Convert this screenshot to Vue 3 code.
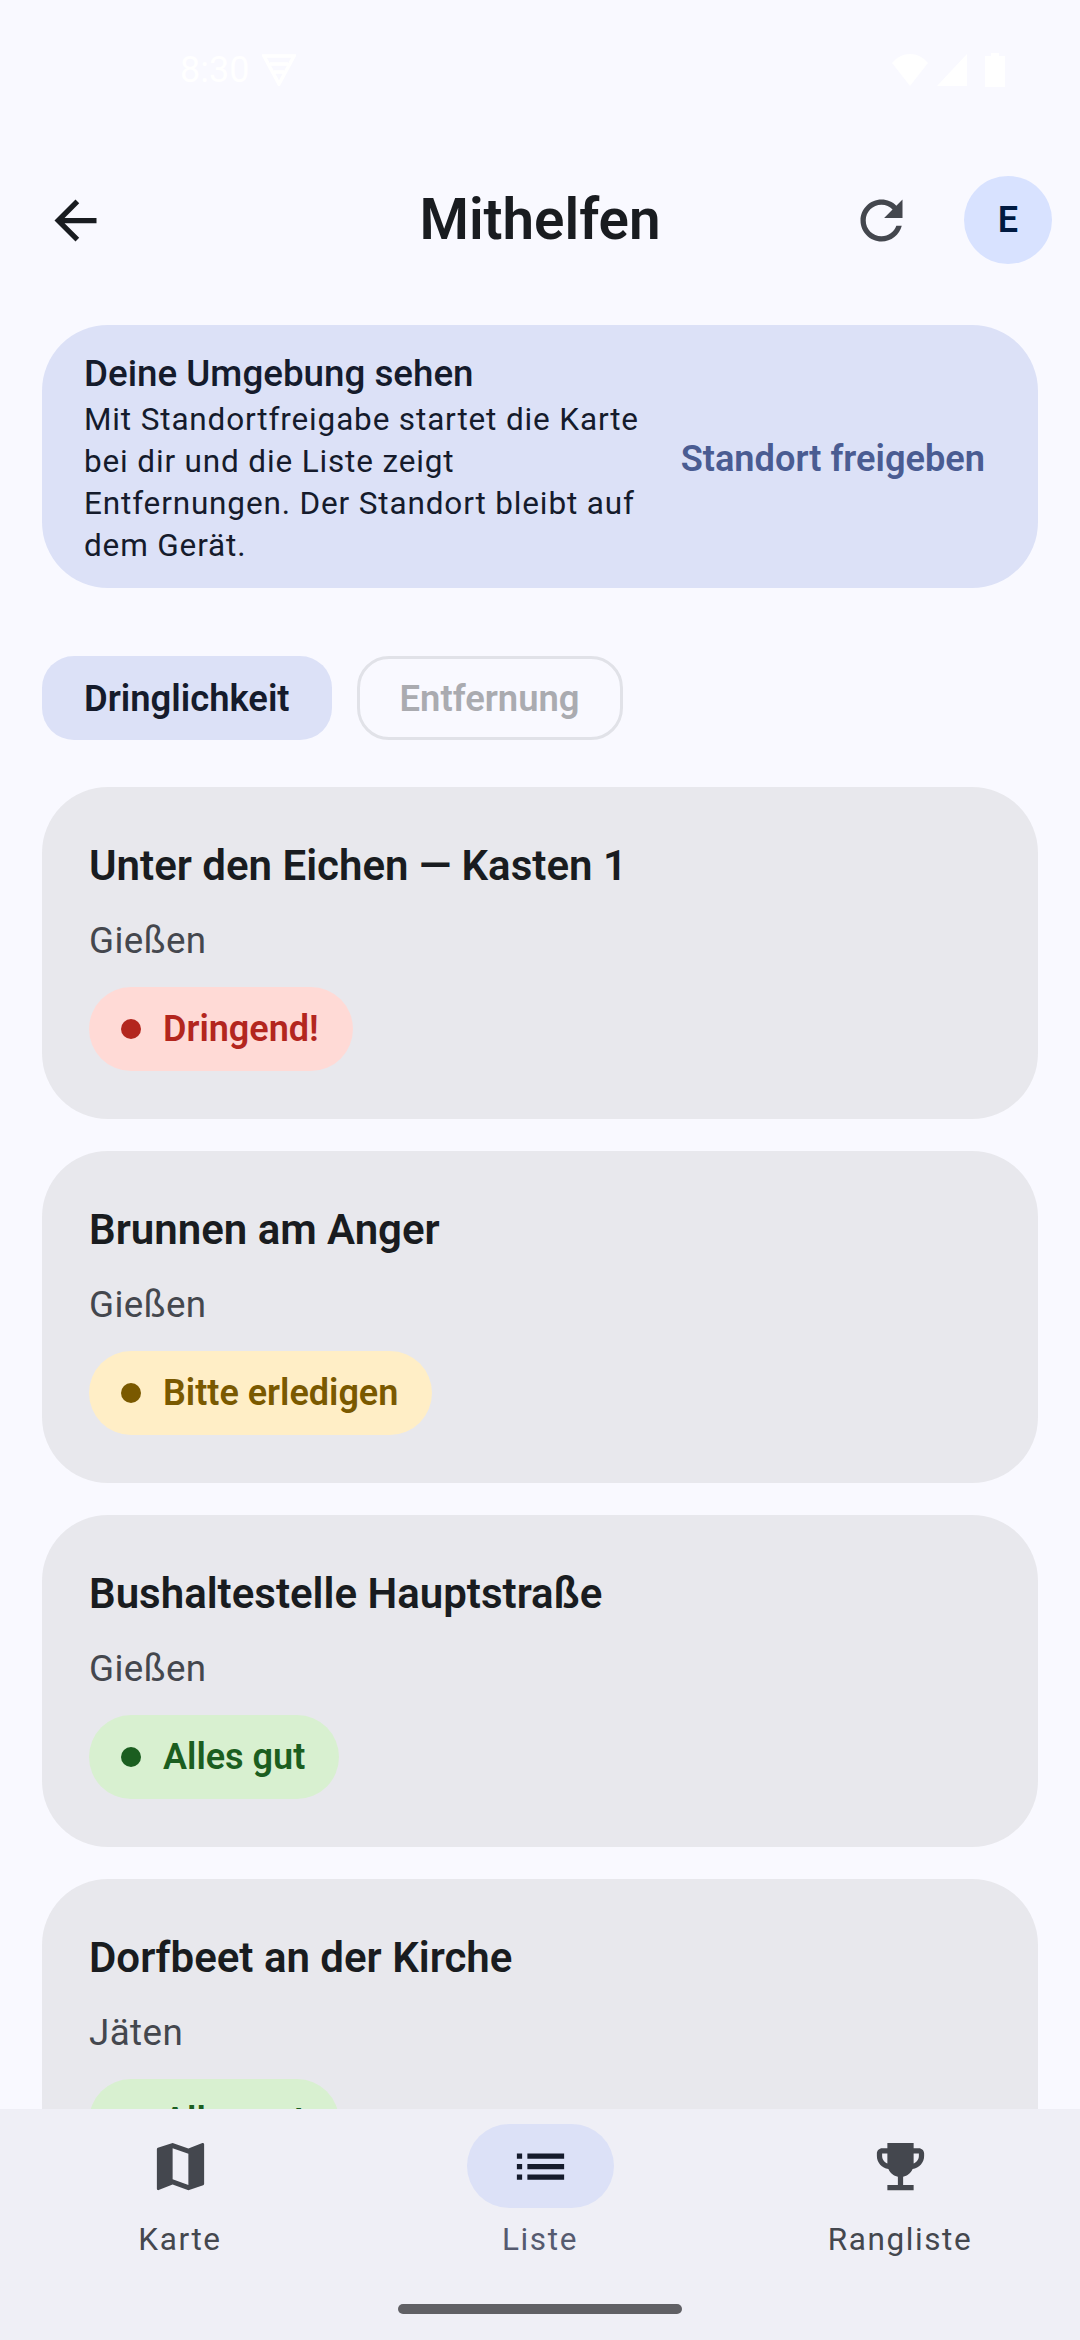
<script setup>
const spots = [
  { name: 'Unter den Eichen — Kasten 1', task: 'Gießen', label: 'Dringend!', tone: 'red' },
  { name: 'Brunnen am Anger', task: 'Gießen', label: 'Bitte erledigen', tone: 'amber' },
  { name: 'Bushaltestelle Hauptstraße', task: 'Gießen', label: 'Alles gut', tone: 'green' },
  { name: 'Dorfbeet an der Kirche', task: 'Jäten', label: 'Alles gut', tone: 'green' },
]
</script>

<template>
  <div class="screen">
    <div class="status">
      <div class="status-left">
        <span class="clock">8:30</span>
        <svg class="vpn" viewBox="0 0 34 32"><path d="M2 2h30L17 30zM8 10h18M12 18h10" fill="none" stroke="#fff" stroke-width="3.5" /></svg>
      </div>
      <div class="status-right">
        <svg class="wifi" viewBox="0 0 36 32"><path d="M0 9c10-12 26-12 36 0L18 32z" fill="#fff" /></svg>
        <svg class="signal" viewBox="0 0 30 32"><path d="M30 0v32H0z" fill="#fff" /></svg>
        <svg class="batt" viewBox="0 0 20 34"><path d="M0 3h6V0h8v3h6v31H0z" fill="#fff" /></svg>
      </div>
    </div>

    <header class="topbar">
      <svg class="icon" viewBox="0 0 24 24"><path d="M20 11H7.83l5.59-5.59L12 4l-8 8 8 8 1.41-1.41L7.83 13H20v-2z" /></svg>
      <h1 class="title">Mithelfen</h1>
      <svg class="icon refresh" viewBox="0 0 24 24"><path d="M17.65 6.35C16.2 4.9 14.21 4 12 4c-4.42 0-7.99 3.58-7.99 8s3.57 8 7.99 8c3.73 0 6.84-2.55 7.73-6h-2.08c-.82 2.33-3.04 4-5.65 4-3.31 0-6-2.69-6-6s2.69-6 6-6c1.66 0 3.14.69 4.22 1.78L13 11h7V4l-2.35 2.35z" /></svg>
      <div class="avatar">E</div>
    </header>

    <main class="content">
      <section class="banner">
        <div class="banner-text">
          <div class="banner-title">Deine Umgebung sehen</div>
          <p class="banner-body">Mit Standortfreigabe startet die Karte bei dir und die Liste zeigt Entfernungen. Der Standort bleibt auf dem Gerät.</p>
        </div>
        <span class="banner-action">Standort freigeben</span>
      </section>

      <div class="chips">
        <span class="chip chip-on">Dringlichkeit</span>
        <span class="chip chip-off">Entfernung</span>
      </div>

      <article v-for="spot in spots" :key="spot.name" class="card">
        <div class="card-title">{{ spot.name }}</div>
        <div class="card-task">{{ spot.task }}</div>
        <div class="badge" :class="spot.tone">
          <span class="dot"></span>
          <span>{{ spot.label }}</span>
        </div>
      </article>
    </main>

    <nav class="nav">
      <div class="nav-item">
        <div class="nav-pill">
          <svg class="nav-icon" viewBox="0 0 24 24"><path d="M20.5 3l-.16.03L15 5.1 9 3 3.36 4.9c-.21.07-.36.25-.36.48V20.5c0 .28.22.5.5.5l.16-.03L9 18.9l6 2.1 5.64-1.9c.21-.07.36-.25.36-.48V3.5c0-.28-.22-.5-.5-.5zM15 19l-6-2.11V5l6 2.11V19z" /></svg>
        </div>
        <span class="nav-label">Karte</span>
      </div>
      <div class="nav-item active">
        <div class="nav-pill">
          <svg class="nav-icon" viewBox="0 0 24 24"><path d="M3 13h2v-2H3v2zm0 4h2v-2H3v2zm0-8h2V7H3v2zm4 4h14v-2H7v2zm0 4h14v-2H7v2zM7 7v2h14V7H7z" /></svg>
        </div>
        <span class="nav-label">Liste</span>
      </div>
      <div class="nav-item">
        <div class="nav-pill">
          <svg class="nav-icon" viewBox="0 0 24 24"><path d="M19 5h-2V3H7v2H5C3.9 5 3 5.9 3 7v1c0 2.55 1.92 4.63 4.39 4.94.63 1.5 1.98 2.63 3.61 2.96V19H7v2h10v-2h-4v-3.1c1.63-.33 2.98-1.46 3.61-2.96C19.08 12.63 21 10.55 21 8V7c0-1.1-.9-2-2-2zM5 8V7h2v3.82C5.84 10.4 5 9.3 5 8zm14 0c0 1.3-.84 2.4-2 2.82V7h2v1z" /></svg>
        </div>
        <span class="nav-label">Rangliste</span>
      </div>
      <div class="home-bar"></div>
    </nav>
  </div>
</template>

<style>
html, body { margin: 0; background: #f9f9ff; }
</style>

<style scoped>
.screen {
  width: 1080px;
  height: 2340px;
  display: flex;
  flex-direction: column;
  overflow: hidden;
  background: #f9f9ff;
  font-family: Roboto, "Noto Sans", sans-serif;
  color: #191c20;
}

.status {
  height: 176px;
  flex: none;
  box-sizing: border-box;
  padding: 50px 75px 0 180px;
  display: flex;
  justify-content: space-between;
  align-items: flex-start;
}
.status-left, .status-right { display: flex; align-items: center; height: 40px; }
.clock { color: #fff; font-size: 36px; }
.vpn { width: 34px; height: 32px; margin-left: 13px; }
.wifi { width: 36px; height: 32px; margin-right: 9px; }
.signal { width: 30px; height: 32px; margin-right: 18px; }
.batt { width: 20px; height: 34px; }

.topbar {
  height: 88px;
  flex: none;
  display: flex;
  align-items: center;
  padding: 0 28px 0 44px;
  position: relative;
}
.icon { width: 63px; height: 63px; fill: #191c20; flex: none; }
.refresh { margin-left: auto; margin-right: 51px; fill: #44474e; }
.title {
  position: absolute;
  left: 0;
  right: 0;
  margin: 0;
  text-align: center;
  font-size: 56.5px;
  font-weight: 600;
}
.avatar {
  width: 88px;
  height: 88px;
  border-radius: 50%;
  background: #d8e2ff;
  color: #001a41;
  font-size: 36px;
  font-weight: 600;
  display: flex;
  align-items: center;
  justify-content: center;
  flex: none;
}

.content {
  flex: 1;
  min-height: 0;
  overflow: hidden;
  padding: 0 42px;
  margin-top: 61px;
}

.banner {
  height: 263px;
  box-sizing: border-box;
  border-radius: 66px;
  background: #dce1f7;
  padding: 4px 53px 0 42px;
  display: flex;
  align-items: center;
  justify-content: space-between;
  color: #151b2c;
}
.banner-text { width: 565px; }
.banner-title { font-size: 36.75px; font-weight: 500; line-height: 46px; }
.banner-body { margin: 2px 0 0; font-size: 31.5px; line-height: 42px; letter-spacing: .85px; }
.banner-action { font-size: 36.2px; font-weight: 600; color: #4a5c92; }

.chips { display: flex; gap: 25px; margin: 68px 0 47px; }
.chip {
  height: 84px;
  box-sizing: border-box;
  border-radius: 32px;
  padding: 0 42px;
  font-size: 36.4px;
  font-weight: 600;
  display: flex;
  align-items: center;
}
.chip-on { background: #dce1f7; color: #151b2c; }
.chip-off { border: 3px solid #e1e2e8; color: #aaabb0; padding: 0 40px; }

.card {
  height: 332px;
  box-sizing: border-box;
  border-radius: 66px;
  background: #e8e8ed;
  padding: 51px 47px 0;
  margin-bottom: 32px;
}
.card-title { font-size: 42px; font-weight: 600; line-height: 56px; color: #191c20; }
.card-task { font-size: 36.75px; line-height: 48px; letter-spacing: .4px; color: #44474e; margin-top: 23px; }
.badge {
  display: inline-flex;
  align-items: center;
  height: 84px;
  border-radius: 42px;
  padding: 0 34px 0 32px;
  margin-top: 22px;
  font-size: 36px;
  font-weight: 600;
  gap: 22px;
}
.dot { width: 20px; height: 20px; border-radius: 50%; background: currentColor; }
.red { background: #ffdad6; color: #b3261e; }
.amber { background: #ffeec6; color: #7a5900; }
.green { background: #d8f0d0; color: #1b5e20; }

.nav {
  height: 231px;
  flex: none;
  box-sizing: border-box;
  padding-top: 15px;
  background: #efeff6;
  display: flex;
  justify-content: space-around;
  position: relative;
}
.nav-item { width: 360px; display: flex; flex-direction: column; align-items: center; }
.nav-pill {
  width: 147px;
  height: 84px;
  border-radius: 42px;
  display: flex;
  align-items: center;
  justify-content: center;
}
.active .nav-pill { background: #dce1f7; }
.nav-icon { width: 63px; height: 63px; fill: #44474e; }
.active .nav-icon { fill: #151b2c; }
.nav-label { font-size: 31.5px; font-weight: 400; letter-spacing: 1.6px; color: #44474e; margin-top: 13px; }
.active .nav-label { color: #555a6f; }
.home-bar {
  position: absolute;
  left: 398px;
  bottom: 26px;
  width: 284px;
  height: 10px;
  border-radius: 5px;
  background: #606065;
}
</style>
